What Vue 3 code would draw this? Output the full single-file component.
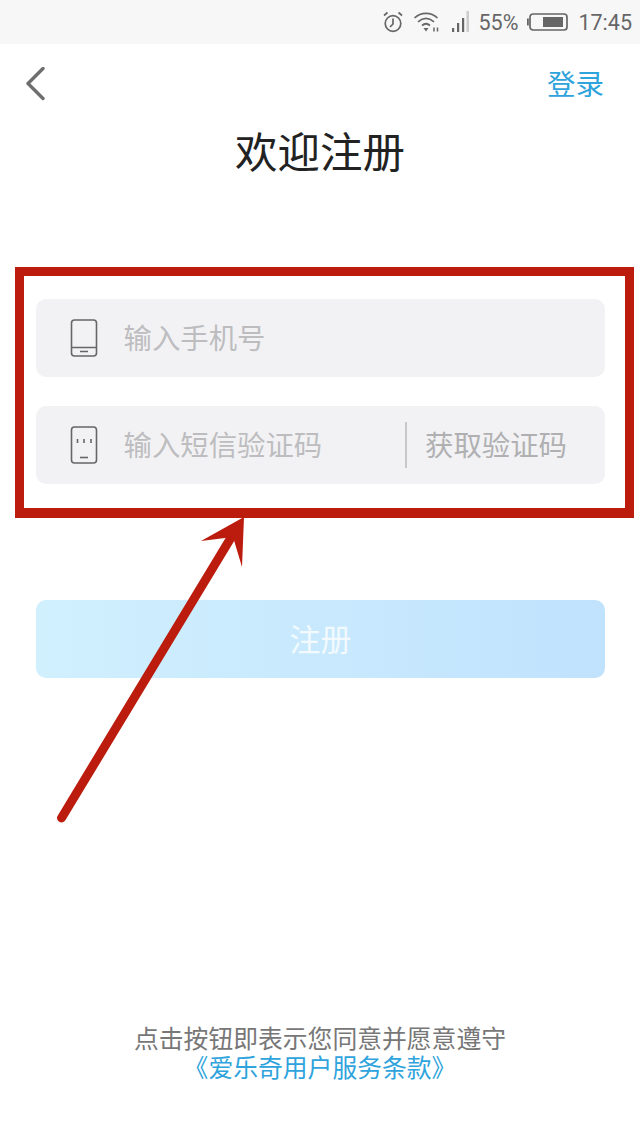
<script setup>
const title = '欢迎注册'
</script>

<template>
  <div class="page">
    <div class="status">
      <svg class="alarm" width="22" height="22" viewBox="0 0 22 22" fill="none" stroke="#666" stroke-width="1.7">
        <circle cx="12" cy="12.500" r="7.800" />
        <path d="M12 7.500V13L9 16" />
        <path d="M3 4.500L6.500 1.500M21 4.500L17.500 1.500" />
      </svg>
      <svg class="wifi" width="26" height="22" viewBox="0 0 26 22" fill="none" stroke="#666" stroke-width="1.700">
        <path d="M1.500 7C8 0.800 18 0.800 24.500 7" />
        <path d="M5 10.800C10 6.600 16 6.600 21 10.800" />
        <path d="M9 14.500C11.500 12.300 14.500 12.300 17 14.500" />
        <path d="M10.500 17H15.500L13 20.500Z" fill="#666" stroke="none" />
        <path d="M21 16.500V20.500M24.500 16.500V20.500" stroke-width="1.500" />
      </svg>
      <svg class="signal" width="20" height="22" viewBox="0 0 20 22">
        <rect x="3" y="17" width="2.200" height="4" fill="#666" />
        <rect x="8" y="12" width="2.200" height="9" fill="#666" />
        <rect x="13" y="7" width="2.200" height="14" fill="#666" />
        <rect x="17.500" y="0" width="2.500" height="21" fill="#ccc" />
      </svg>
      <span class="pct">55%</span>
      <svg class="battery" width="41" height="18" viewBox="0 0 41 18" fill="none">
        <rect x="3" y="1" width="37" height="16" rx="3" stroke="#666" stroke-width="1.700" />
        <rect x="0" y="5.500" width="1.800" height="7" fill="#666" />
        <rect x="16" y="4" width="20" height="10" fill="#666" />
      </svg>
      <span class="time">17:45</span>
    </div>

    <div class="nav">
      <svg class="back" width="22" height="34" viewBox="0 0 22 34" fill="none" stroke="#6e6e6e" stroke-width="3.400" stroke-linecap="round" stroke-linejoin="round">
        <path d="M18 1.500L3 16.500L18 31.500" />
      </svg>
      <span class="login">登录</span>
    </div>

    <h1 class="title">{{ title }}</h1>

    <div class="callout">
      <div class="field">
        <svg class="ficon" width="28" height="38" viewBox="0 0 28 38" fill="none" stroke="#666" stroke-width="1.600">
          <rect x="1.500" y="1" width="25" height="36" rx="3" />
          <path d="M1.500 28.500H26.500M10 32.500H18" />
        </svg>
        <span class="ph">输入手机号</span>
      </div>
      <div class="field">
        <svg class="ficon" width="28" height="38" viewBox="0 0 28 38" fill="none" stroke="#666" stroke-width="1.600">
          <rect x="1.500" y="1" width="25" height="36" rx="3" />
          <path d="M10 31.500H18" />
          <path d="M7.500 13V17M14 13V17M21 13V17" />
        </svg>
        <span class="ph grow">输入短信验证码</span>
        <span class="divider"></span>
        <span class="ph code">获取验证码</span>
      </div>
    </div>

    <button class="submit">注册</button>

    <div class="terms">
      <div class="terms-a">点击按钮即表示您同意并愿意遵守</div>
      <div class="terms-b">《爱乐奇用户服务条款》</div>
    </div>

    <svg class="arrow" width="640" height="1138" viewBox="0 0 640 1138">
      <path d="M61.500 818L232 536" stroke="#bb1c0e" stroke-width="9" stroke-linecap="round" fill="none" />
      <path d="M244 517L242 567L233 537L201 541Z" fill="#bb1c0e" />
    </svg>
  </div>
</template>

<style>
html, body { margin: 0; background: #fff; }
</style>

<style scoped>
.page {
  position: relative;
  width: 640px;
  height: 1138px;
  overflow: hidden;
  background: #fff;
  font-family: "Liberation Sans", "Noto Sans CJK SC", sans-serif;
}
.status {
  height: 44px;
  background: #f7f7f7;
  display: flex;
  align-items: center;
  justify-content: flex-end;
  padding-right: 8px;
  color: #666;
  box-sizing: border-box;
}
.alarm { margin-right: 10px; }
.wifi { margin-right: 10px; }
.signal { margin-right: 10px; }
.pct { font-size: 21.5px; margin-right: 9px; font-family: "Roboto", sans-serif; }
.battery { margin-right: 10px; }
.time { font-size: 21.5px; font-family: "Roboto", sans-serif; }
.nav {
  height: 80px;
  display: flex;
  align-items: center;
  justify-content: space-between;
  padding: 0 36px 0 25px;
}
.login { font-size: 28.5px; color: #2ea3dc; margin-bottom: 4px; }
.title {
  margin: 5px 0 0;
  font-size: 42.5px;
  line-height: 50px;
  font-weight: 400;
  color: #222;
  text-align: center;
}
.callout {
  margin: 88px 6px 0 15px;
  height: 251px;
  box-sizing: border-box;
  border: 9px solid #bb1c0e;
  border-bottom-width: 10px;
  padding: 23px 20px 0 12px;
  display: flex;
  flex-direction: column;
  gap: 29px;
}
.field {
  height: 78px;
  background: #f2f2f4;
  border-radius: 10px;
  display: flex;
  align-items: center;
  padding-left: 34px;
}
.ficon { margin-right: 25.5px; flex: none; }
.ph { font-size: 28.4px; color: #bdbdc0; margin-bottom: 4px; }
.grow { flex: 1; }
.divider { width: 2px; height: 46px; background: #c8c8ca; margin-right: 18px; }
.code { color: #b0b0b2; margin-right: 38px; }
.submit {
  display: block;
  width: 569px;
  height: 78px;
  margin: 82px 0 0 36px;
  padding: 0 0 4px;
  border: 0;
  border-radius: 10px;
  background: linear-gradient(90deg, #d0f0fe, #c0e2fd);
  color: #f2fafe;
  font: inherit;
  font-size: 31px;
}
.terms {
  position: absolute;
  left: 0;
  right: 0;
  top: 1025px;
  text-align: center;
  font-size: 24.8px;
  line-height: 29px;
}
.terms-a { color: #777; }
.terms-b { color: #2ea3dc; }
.arrow { position: absolute; left: 0; top: 0; pointer-events: none; }
</style>
